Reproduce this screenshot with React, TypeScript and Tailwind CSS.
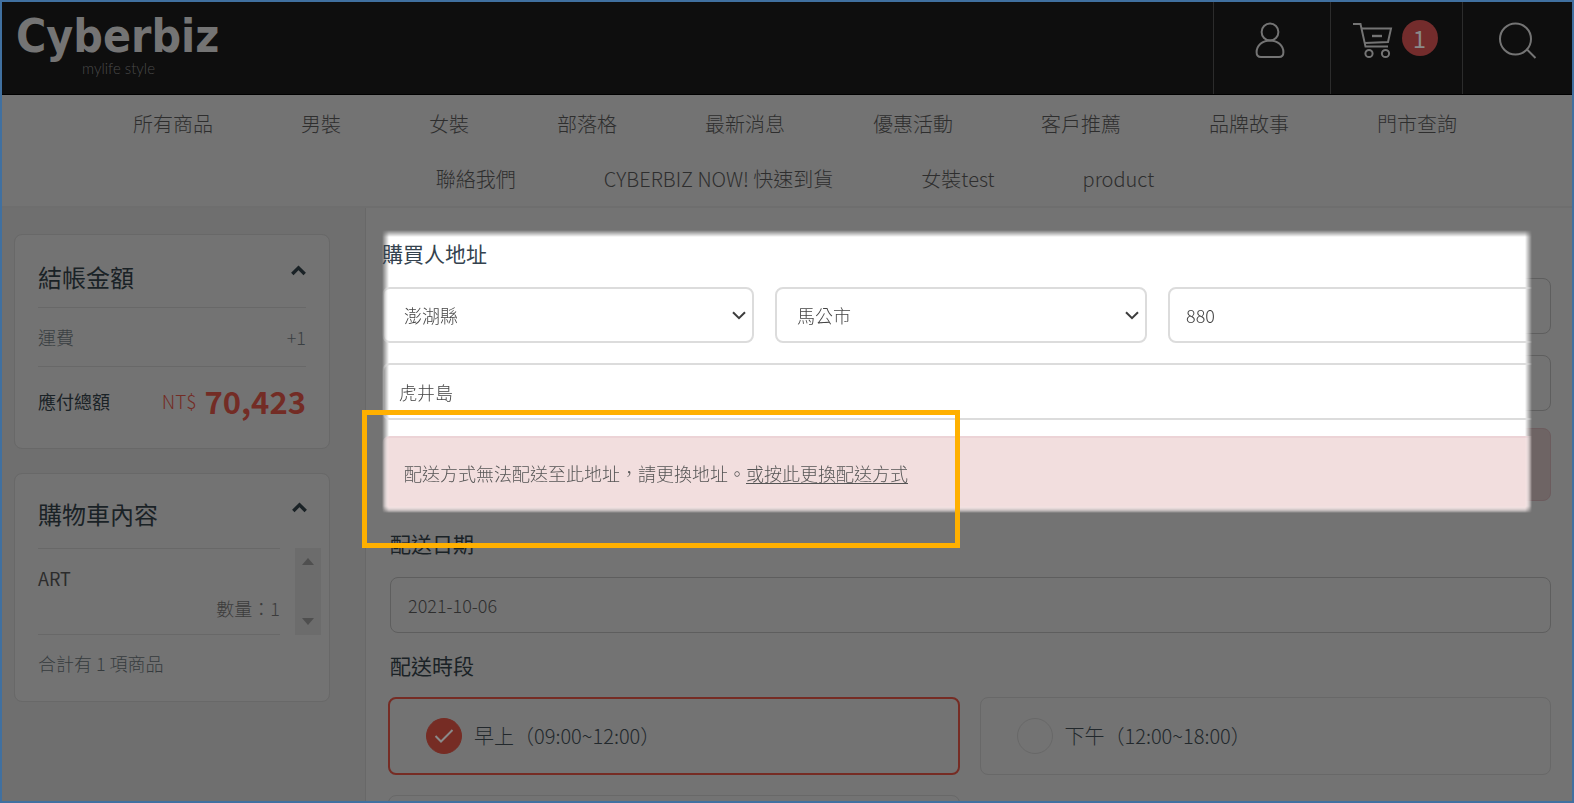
import type { ReactNode } from 'react';

const navItems = [
  '所有商品',
  '男裝',
  '女裝',
  '部落格',
  '最新消息',
  '優惠活動',
  '客戶推薦',
  '品牌故事',
  '門市查詢',
  '聯絡我們',
  'CYBERBIZ NOW! 快速到貨',
  '女裝test',
  'product',
];

function Header() {
  return (
    <header className="flex h-[93px] shrink-0 items-stretch justify-between border-b border-black bg-[#0e0e0e]">
      <a href="#" className="block pl-[14px]">
        <span className="block h-14 text-[46px] leading-[68px] font-bold text-[#747474]" style={{ fontFamily: '"DejaVu Sans Condensed", "DejaVu Sans", sans-serif' }}>
          Cyberbiz
        </span>
        <span className="block pl-[66px] text-[15px] leading-5 font-light text-[#4a4a4a]" style={{ fontFamily: 'Lato, sans-serif' }}>
          mylife style
        </span>
      </a>
      <div className="flex">
        <a href="#" aria-label="會員" className="flex w-[117px] justify-center border-l border-[#2c2c2c] pt-5 pr-1">
          <svg width="32" height="38" viewBox="0 0 32 38" fill="none" stroke="#747474" strokeWidth="2">
            <circle cx="16" cy="10" r="8.4" />
            <path d="M16 18.4c-7.500 0-13.400 5-13.400 11.800 0 3 1.600 4.800 4.400 4.800h18c2.800 0 4.400-1.800 4.400-4.800C29.400 23.400 23.500 18.400 16 18.400z" />
          </svg>
        </a>
        <a href="#" aria-label="購物車" className="flex w-[132px] justify-center gap-2 border-l border-[#2c2c2c] pt-[18px] pr-1">
          <svg width="42" height="40" viewBox="0 0 42 40" fill="none" stroke="#747474" strokeWidth="2">
            <path d="M1 4h7.500l5 22.600H36" />
            <path d="M9.500 8.600H39l-3 13.400-23.300 1" />
            <path d="M20 16h10" strokeWidth="2.400" />
            <circle cx="17" cy="33.500" r="3.600" />
            <circle cx="33.500" cy="33.500" r="3.600" />
          </svg>
          <span className="flex h-9 w-9 items-center justify-center rounded-full bg-[#732c2c] text-[24px] leading-8 text-[#8a8a8a]">1</span>
        </a>
        <a href="#" aria-label="搜尋" className="flex w-[110px] justify-center border-l border-[#2c2c2c] pt-5">
          <svg width="40" height="38" viewBox="0 0 40 38" fill="none" stroke="#747474" strokeWidth="2">
            <circle cx="17.500" cy="17" r="15.500" />
            <path d="M28.500 27l9 9" />
          </svg>
        </a>
      </div>
    </header>
  );
}

function Nav() {
  return (
    <nav className="flex shrink-0 flex-wrap justify-center border-b-2 border-[#6e6e6e] pt-px pr-12 pl-16">
      {navItems.map((item) => (
        <a key={item} href="#" className="px-11 text-[20px] leading-[55px] font-light text-[#2e2e2e]">
          {item}
        </a>
      ))}
    </nav>
  );
}

function CardTitle({ children }: { children: ReactNode }) {
  return (
    <div className="flex justify-between">
      <h2 className="text-[24px] leading-9 font-normal text-[#1a2226]">{children}</h2>
      <button type="button" aria-label="收合" className="h-[22px]">
        <svg width="15" height="11" viewBox="0 0 15 11" fill="none" stroke="#1a2226" strokeWidth="3.400">
          <path d="M1.300 9l6.200-6.200L13.700 9" />
        </svg>
      </button>
    </div>
  );
}

function Sidebar() {
  return (
    <aside className="flex w-[364px] shrink-0 flex-col gap-6 border-r border-[#686868] bg-[#6f6f6f] pt-[26px] pr-[35px] pl-3 text-[18px]">
      <section className="rounded-lg border border-[#686868] bg-[#737373] px-[23px] pt-6 pb-[25px]">
        <CardTitle>結帳金額</CardTitle>
        <div className="mt-3 flex justify-between border-y border-[#686868] py-4 leading-[26px] font-light text-[#3a3f42]">
          <span>運費</span>
          <span>+1</span>
        </div>
        <div className="flex items-center justify-between pt-3 leading-[44px]">
          <span className="text-[#1a2226]">應付總額</span>
          <span className="flex items-center gap-2 text-[#732c25]">
            <span className="text-[19px] font-light">NT$</span>
            <strong className="text-[31px] font-bold">70,423</strong>
          </span>
        </div>
      </section>

      <section className="rounded-lg border border-[#686868] bg-[#737373] pt-[22px] pr-2 pb-[22px] pl-[23px]">
        <div className="pr-[14px]">
          <CardTitle>購物車內容</CardTitle>
        </div>
        <div className="mt-4 flex gap-[15px]">
          <div className="flex-1 border-y border-[#686868] pt-[14px] leading-[30px]">
            <p className="text-[#2c2c2c]">ART</p>
            <p className="mb-[11px] text-right font-light text-[#3c3c3c]">數量：1</p>
          </div>
          <div className="flex w-[26px] flex-col items-center justify-between bg-[#6c6c6c] py-[10px]">
            <svg width="12" height="7" fill="#4f4f4f">
              <path d="M0 7l6-7 6 7z" />
            </svg>
            <svg width="12" height="7" fill="#4f4f4f">
              <path d="M0 0h12L6 7z" />
            </svg>
          </div>
        </div>
        <p className="mt-3 leading-8 font-light text-[#363b3e]">合計有 1 項商品</p>
      </section>
    </aside>
  );
}

function SelectField({ label, value }: { label: string; value: string }) {
  return (
    <div className="relative">
      <select aria-label={label} defaultValue={value} className="h-14 w-full appearance-none rounded-lg border-2 border-[#dcdcdc] bg-white px-5 font-light text-[#444]">
        <option>{value}</option>
      </select>
      <svg className="pointer-events-none absolute top-6 right-2" width="14" height="9" viewBox="0 0 14 9" fill="none" stroke="#3c3c3c" strokeWidth="2">
        <path d="M1 1.200l6 6 6-6" />
      </svg>
    </div>
  );
}

// bright panel that floats over the dimmed address rows
function AddressSpotlight() {
  return (
    <div className="absolute -top-12 right-[19px] -bottom-3 -left-2 overflow-hidden text-[18px]">
      <div className="absolute inset-0 bg-white [mask-composite:intersect] [mask-image:linear-gradient(to_right,transparent,#000_7px,#000_calc(100%-7px),transparent),linear-gradient(to_bottom,transparent,#000_7px,#000_calc(100%-7px),transparent)]"></div>
      <h3 className="relative pt-[7px] text-[21px] leading-8 font-normal text-[#34424e]">購買人地址</h3>
      <div className="relative mt-[18px] h-[226px] [mask-composite:intersect] [mask-image:linear-gradient(to_right,transparent,#000_7px,#000_calc(100%-7px),transparent),linear-gradient(to_bottom,#000_calc(100%-7px),transparent)]">
        <div className="-mr-2">
          <div className="grid grid-cols-3 gap-[21px]">
            <SelectField label="縣市" value="澎湖縣" />
            <SelectField label="鄉鎮市區" value="馬公市" />
            <input aria-label="郵遞區號" defaultValue="880" className="-mr-2 h-14 rounded-lg border-2 border-[#dcdcdc] px-4 font-light text-[#444]" />
          </div>
          <div className="-mr-2">
            <input aria-label="地址" defaultValue="虎井島" className="mt-5 h-[57px] w-full rounded-lg border-2 border-[#dcdcdc] px-[15px] font-light text-[#444]" />
            <p className="mt-4 h-20 rounded-lg border-2 border-[#ecd3d6] bg-[#f2dede] px-5 leading-[70px] font-light text-[#555]">
              配送方式無法配送至此地址，請更換地址。
              <a href="#" className="underline underline-offset-2">或按此更換配送方式</a>
            </p>
          </div>
        </div>
      </div>
    </div>
  );
}

function TimeSlot({ label, checked }: { label: string; checked?: boolean }) {
  return (
    <label
      className={
        checked
          ? 'flex h-[78px] items-center gap-3 rounded-lg border-2 border-[#762c24] px-9'
          : 'flex h-[78px] items-center gap-3 rounded-lg border border-[#686868] px-9'
      }
    >
      <input type="radio" name="slot" defaultChecked={checked} className="peer sr-only" />
      <span className="flex h-9 w-9 items-center justify-center rounded-full border border-[#686868] peer-checked:border-[#762c24] peer-checked:bg-[#762c24]">
        {checked && (
          <svg width="20" height="16" viewBox="0 0 20 16" fill="none" stroke="#8a8a8a" strokeWidth="2">
            <path d="M1.500 8l5.500 5.500L18.500 2" />
          </svg>
        )}
      </span>
      <span className="text-[20px] font-light text-[#22282c]">{label}</span>
    </label>
  );
}

function CheckoutForm() {
  return (
    <main className="min-w-0 flex-1 pt-[70px] pr-[21px] pl-6">
      <div className="relative">
        <div className="h-14 rounded-lg border border-[#5e5e5e]"></div>
        <div className="mt-[21px] h-14 rounded-lg border border-[#5e5e5e]"></div>
        <div className="mt-[17px] h-[73px] rounded-lg border border-[#6c5c5e] bg-[#6e6464]"></div>
        <AddressSpotlight />
        <div className="pointer-events-none absolute top-[132px] -left-7 h-[138px] w-[598px] border-[5px] border-[#ffb000]"></div>
      </div>

      <label htmlFor="date" className="mt-[26px] block text-[21px] leading-8 text-[#1a2226]">
        配送日期
      </label>
      <input id="date" defaultValue="2021-10-06" className="mt-[18px] block h-14 w-full rounded-lg border border-[#5e5e5e] px-[17px] text-[18px] font-light text-[#2e2e2e]" />

      <h3 className="mt-4 text-[21px] leading-8 font-normal text-[#1a2226]">配送時段</h3>
      <div className="mt-4 -ml-0.5 grid grid-cols-2 gap-5">
        <TimeSlot label="早上（09:00~12:00）" checked />
        <TimeSlot label="下午（12:00~18:00）" />
        <div className="h-[78px] rounded-lg border border-[#686868]"></div>
      </div>
    </main>
  );
}

export default function App() {
  return (
    <div className="flex h-screen flex-col overflow-hidden border-2 border-[#4070a0] bg-[#737373]" style={{ fontFamily: '"Noto Sans CJK TC", sans-serif' }}>
      <Header />
      <Nav />
      <div className="flex min-h-0 flex-1 items-stretch">
        <Sidebar />
        <CheckoutForm />
      </div>
    </div>
  );
}
